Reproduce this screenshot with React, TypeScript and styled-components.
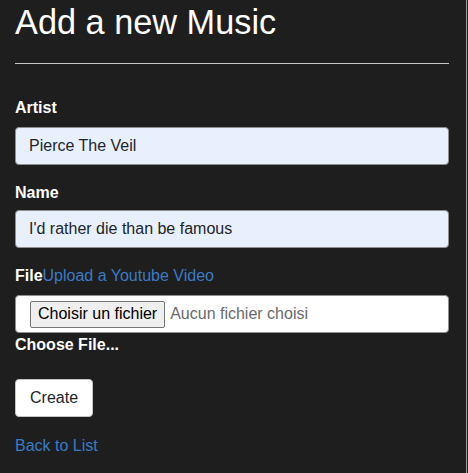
import React from "react";
import styled, { createGlobalStyle } from "styled-components";

const Global = createGlobalStyle`
  html, body { margin: 0; padding: 0; background: #1e1e1e; }
  body { font-family: "Liberation Sans", Arial, sans-serif; font-size: 16px; line-height: 1.5; color: #fff; }
  * { box-sizing: border-box; }
`;

const Page = styled.div`
  width: 467px;
  min-height: 473px;
  border-right: 1px solid #9a9a9a;
  padding: 0 18px 0 15px;
`;

const Title = styled.h1`
  margin: 0;
  padding-top: 2px;
  font-size: 34.3px;
  font-weight: 400;
  line-height: 40px;
  color: #fff;
`;

const Rule = styled.hr`
  margin: 21px 0 0 0;
  border: 0;
  border-top: 1px solid #c8c8c8;
  width: 434px;
`;

const Form = styled.form`
  width: 434px;
  display: flex;
  flex-direction: column;
  padding-top: 32px;
`;

const Group = styled.div<{ $gap?: number }>`
  display: flex;
  flex-direction: column;
  margin-bottom: ${(p) => p.$gap ?? 16}px;
`;

const Label = styled.label<{ $mb?: number }>`
  font-weight: 700;
  color: #fff;
  line-height: 24px;
  margin-bottom: ${(p) => p.$mb ?? 7}px;
`;

const Input = styled.input`
  height: 38px;
  width: 100%;
  padding: 6px 13px;
  font-family: inherit;
  font-size: 16px;
  color: #212529;
  background: #e8f0fe;
  border: 1px solid #8f8f8f;
  border-radius: 4px;
  outline: none;
`;

const FileRow = styled.div`
  display: flex;
  align-items: baseline;
  line-height: 24px;
  margin-bottom: 7px;
`;

const FileLabel = styled.span`
  font-weight: 700;
  color: #fff;
`;

const Link = styled.a`
  color: #3a7bc6;
  text-decoration: none;
`;

const FileBox = styled.div`
  height: 38px;
  display: flex;
  align-items: center;
  padding: 0 13px 0 14px;
  background: #fff;
  border: 1px solid #8f8f8f;
  border-radius: 4px;
`;

const FileButton = styled.button`
  height: 27px;
  padding: 0 7px;
  font-family: inherit;
  font-size: 16px;
  color: #000;
  background: #efefef;
  border: 1px solid #767676;
  border-radius: 2px;
  margin-right: 5px;
`;

const FileText = styled.span`
  color: #6a6a6a;
  font-size: 16px;
`;

const Hint = styled.span`
  font-weight: 700;
  color: #fff;
  line-height: 24px;
`;

const CreateButton = styled.button`
  align-self: flex-start;
  height: 38px;
  padding: 0 14px;
  margin-top: 22px;
  font-family: inherit;
  font-size: 16px;
  color: #212529;
  background: #fff;
  border: 1px solid #c4c4c4;
  border-radius: 4px;
`;

const Footer = styled.div`
  margin-top: 17px;
  line-height: 24px;
`;

export default function App() {
  return (
    <>
      <Global />
      <Page>
        <Title>Add a new Music</Title>
        <Rule />
        <Form onSubmit={(e) => e.preventDefault()}>
          <Group>
            <Label $mb={7}>Artist</Label>
            <Input defaultValue="Pierce The Veil" />
          </Group>
          <Group $gap={16}>
            <Label $mb={5}>Name</Label>
            <Input defaultValue="I'd rather die than be famous" />
          </Group>
          <Group $gap={0}>
            <FileRow>
              <FileLabel>File</FileLabel>
              <Link href="#">Upload a Youtube Video</Link>
            </FileRow>
            <FileBox>
              <FileButton type="button">Choisir un fichier</FileButton>
              <FileText>Aucun fichier choisi</FileText>
            </FileBox>
            <Hint>Choose File...</Hint>
          </Group>
          <CreateButton type="submit">Create</CreateButton>
        </Form>
        <Footer>
          <Link href="#">Back to List</Link>
        </Footer>
      </Page>
    </>
  );
}
